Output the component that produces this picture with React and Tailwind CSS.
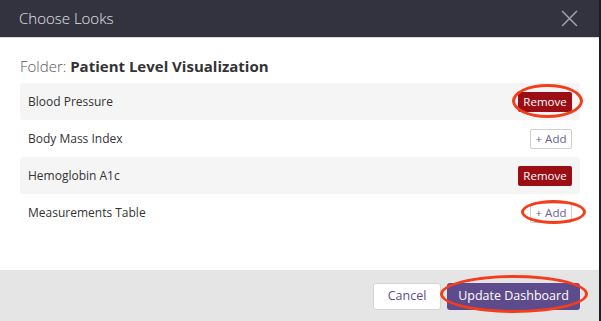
import React from "react";

const looks = [
    { name: "Blood Pressure", added: true, mark: true },
    { name: "Body Mass Index", added: false },
    { name: "Hemoglobin A1c", added: true },
    { name: "Measurements Table", added: false, mark: true },
];

function Ring({ className }) {
    return (
        <span
            className={`pointer-events-none absolute rounded-[50%] border-[3px] border-[#f53d1c] ${className}`}
        ></span>
    );
}

export default function App() {
    return (
        <div className="w-[601px] h-[321px] bg-[#1d1d24] overflow-hidden font-['Open_Sans',sans-serif]">
            <div className="w-[599px] h-[321px] bg-white flex flex-col">
                {/* Header */}
                <div className="h-[38px] bg-[#32333f] border-b border-[#d9d9d9] flex items-center justify-between pl-[19px] pr-[21px]">
                    <h2 className="text-[15px] font-light text-[#e4e4e8] leading-none">
                        Choose Looks
                    </h2>
                    <svg
                        className="w-[17px] h-[17px] text-[#a3a4ab]"
                        viewBox="0 0 16 16"
                        fill="none"
                        stroke="currentColor"
                        strokeWidth={1.4}
                    >
                        <path d="M1 1L15 15M15 1L1 15" />
                    </svg>
                </div>

                {/* Body */}
                <div className="flex-1 px-5 pt-[18px]">
                    <p className="text-[15px] text-[#333] leading-[20px] mb-[7px]">
                        <span className="font-light text-[#555]">Folder: </span>
                        <span className="font-bold text-[#333]">Patient Level Visualization</span>
                    </p>

                    <div className="w-[560px]">
                        {looks.map((look, i) => (
                            <div
                                key={look.name}
                                className={`h-[37px] flex items-center justify-between pl-2 pr-2 rounded-[3px] ${
                                    i % 2 === 0 ? "bg-[#f5f5f5]" : "bg-white"
                                }`}
                            >
                                <span className="text-[12px] text-[#333]">{look.name}</span>
                                {look.added ? (
                                    <button className="relative h-[20px] w-[54px] bg-[#9b0e15] text-white text-[11.5px] rounded-[2px] leading-none">
                                        Remove
                                        {look.mark && <Ring className="-left-[6px] -top-[8px] w-[71px] h-[34px]" />}
                                    </button>
                                ) : (
                                    <button className="relative h-[20px] w-[42px] bg-white border border-[#cfcfcf] text-[#6d5e96] text-[11.5px] rounded-[2px] leading-none">
                                        + Add
                                        {look.mark && <Ring className="-left-[10px] -top-[4px] w-[65px] h-[24px]" />}
                                    </button>
                                )}
                            </div>
                        ))}
                    </div>
                </div>

                {/* Footer */}
                <div className="h-[51px] bg-[#e5e5e5] flex items-center justify-end gap-[6px] pr-[19px] pt-[1px]">
                    <button className="h-[27px] w-[68px] bg-white border border-[#d4d4d4] rounded-[3px] text-[12.5px] text-[#5f4c8c]">
                        Cancel
                    </button>
                    <button className="relative h-[27px] w-[133px] bg-[#5e4b8b] rounded-[3px] text-[12.5px] text-white">
                        Update Dashboard
                        <Ring className="-left-[7px] -top-[8px] w-[148px] h-[38px]" />
                    </button>
                </div>
            </div>
        </div>
    );
}
